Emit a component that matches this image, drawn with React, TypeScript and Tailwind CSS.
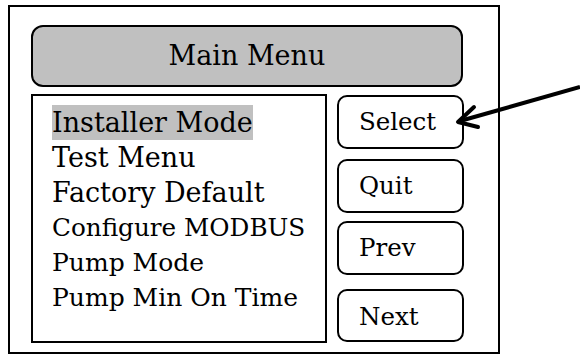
export default function App() {
  const items: [string, string][] = [
    ["Installer Mode", "text-[27px]"],
    ["Test Menu", "text-[27px]"],
    ["Factory Default", "text-[27px]"],
    ["Configure MODBUS", "text-[24.7px]"],
    ["Pump Mode", "text-[25px]"],
    ["Pump Min On Time", "text-[25px]"],
  ];
  return (
    <div className="relative w-[580px] h-[356px] bg-white overflow-hidden font-['DejaVu_Serif',serif] text-black">
      <div className="ml-[8px] mt-[5px] w-[492px] h-[349px] border-2 border-black pt-[18px] pl-[21px] flex flex-col">
        <div className="w-[432px] h-[62px] rounded-[12px] border-2 border-black bg-[#c0c0c0] flex items-center justify-center text-[27px]">
          Main Menu
        </div>
        <div className="mt-[7px] flex">
          <div className="w-[296px] h-[249px] border-2 border-black pt-[9px] pl-[19px] flex flex-col items-start">
            {items.map(([t, size], i) => (
              <div
                key={t}
                className={
                  i === 0
                    ? `h-[35px] leading-[35px] ${size} bg-[#c0c0c0] whitespace-nowrap`
                    : `h-[35px] leading-[35px] ${size} whitespace-nowrap`
                }
              >
                {t}
              </div>
            ))}
          </div>
          <div className="ml-[10px] w-[127px] flex flex-col text-[24.5px]">
            <div className="mt-[1px] h-[54px] rounded-[10px] border-2 border-black flex items-center pl-[20px]">Select</div>
            <div className="mt-[10px] h-[54px] rounded-[10px] border-2 border-black flex items-center pl-[20px]">Quit</div>
            <div className="mt-[8px] h-[54px] rounded-[10px] border-2 border-black flex items-center pl-[20px]">Prev</div>
            <div className="mt-[14px] h-[53px] rounded-[10px] border-2 border-black flex items-center pl-[20px] pt-[3px]">Next</div>
          </div>
        </div>
      </div>
      <svg className="absolute left-0 top-0" width="580" height="356" viewBox="0 0 580 356">
        <line x1="580" y1="87" x2="460" y2="121" stroke="black" strokeWidth="4" />
        <polyline points="474,107 458,122 478,127" fill="none" stroke="black" strokeWidth="4" strokeLinecap="round" strokeLinejoin="round" />
      </svg>
    </div>
  );
}
